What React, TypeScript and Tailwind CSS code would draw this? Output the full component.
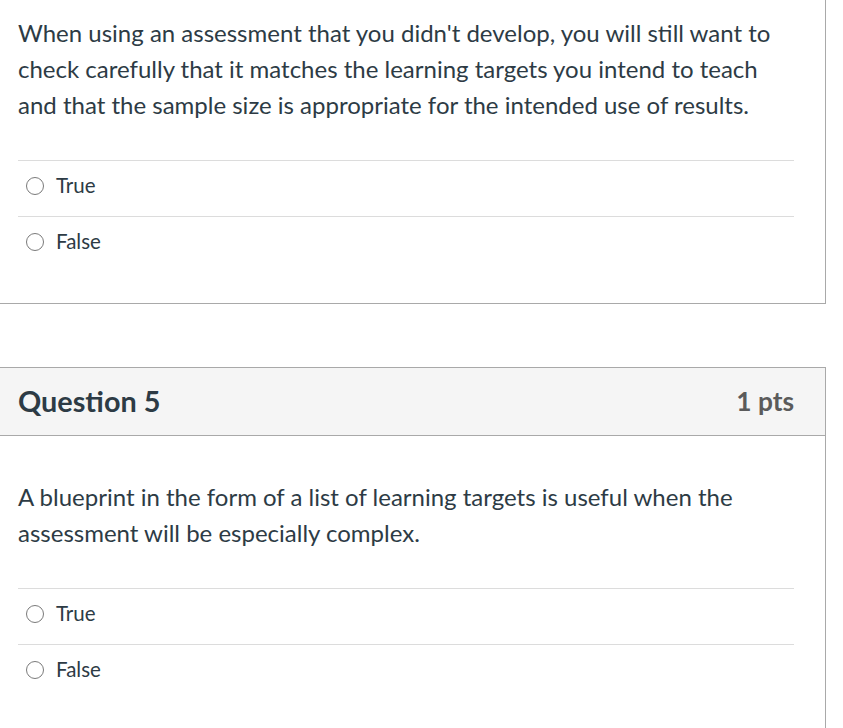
import React from 'react';

const Answer = ({ label }: { label: string }) => (
  <div className="flex items-center h-[56px] pb-[6px] border-t border-[#dcdcdc]">
    <span className="ml-[8px] w-[18px] h-[18px] shrink-0 rounded-full border-[1.5px] border-[#7a7a7a] bg-white" />
    <span className="ml-[12px] text-[20.5px] text-[#2d3b45]">{label}</span>
  </div>
);

const QuestionBody = ({ text }: { text: string }) => (
  <div className="pl-[18px] pr-[31px]">
    <p className="text-[24px] leading-[36px] text-[#2d3b45]">{text}</p>
    <div className="mt-[37px]">
      <Answer label="True" />
      <Answer label="False" />
    </div>
  </div>
);

export default function App() {
  return (
    <div className="min-h-screen bg-white font-['Lato','Liberation_Sans',sans-serif]">
      <div className="w-[826px] border-r border-b border-[#a9a9a9] pt-[15px] pb-[31px]">
        <QuestionBody text="When using an assessment that you didn't develop, you will still want to check carefully that it matches the learning targets you intend to teach and that the sample size is appropriate for the intended use of results." />
      </div>

      <div className="mt-[63px] w-[826px] border-r border-[#a9a9a9]">
        <div className="flex items-center justify-between h-[69px] bg-[#f5f5f5] border-t border-b border-[#a9a9a9] pl-[18px] pr-[31px]">
          <h2 className="text-[28.8px] font-bold text-[#2d3b45]">Question 5</h2>
          <span className="text-[26.3px] font-bold text-[#5b5b5b]">1 pts</span>
        </div>
        <div className="pt-[43px] pb-[30px]">
          <QuestionBody text="A blueprint in the form of a list of learning targets is useful when the assessment will be especially complex." />
        </div>
      </div>
    </div>
  );
}
